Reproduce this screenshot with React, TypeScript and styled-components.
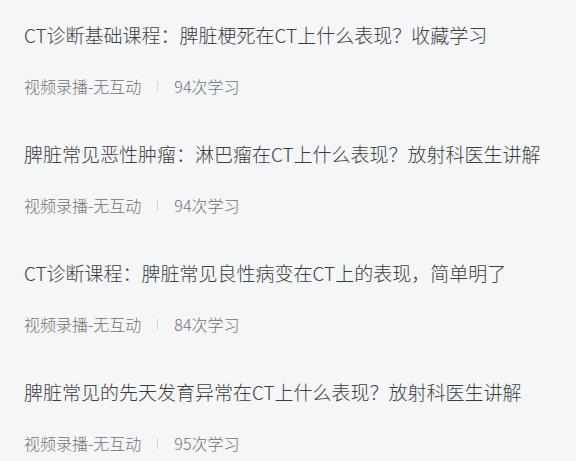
import styled, { createGlobalStyle } from 'styled-components';

const GlobalStyle = createGlobalStyle`
    html, body {
        margin: 0;
        padding: 0;
        background: #f5f6f8;
    }
    body {
        font-family: "Noto Sans CJK SC", "Noto Sans", sans-serif;
    }
`;

const List = styled.div`
    display: flex;
    flex-direction: column;
    padding: 0 24px;
`;

const Item = styled.div`
    display: flex;
    flex-direction: column;
    padding: 21px 0 22px;
`;

const Title = styled.div`
    font-size: 19px;
    font-weight: 300;
    line-height: 28px;
    color: #3d3d3d;
    white-space: nowrap;
    overflow: hidden;
`;

const Meta = styled.div`
    display: flex;
    align-items: center;
    margin-top: 26px;
    font-size: 16px;
    font-weight: 300;
    line-height: 22px;
    color: #707070;
`;

const Divider = styled.span`
    width: 1px;
    height: 11px;
    margin: 0 16px;
    background: #d4d5d8;
`;

const courses = [
    {title: 'CT诊断基础课程：脾脏梗死在CT上什么表现？收藏学习', count: 94},
    {title: '脾脏常见恶性肿瘤：淋巴瘤在CT上什么表现？放射科医生讲解', count: 94},
    {title: 'CT诊断课程：脾脏常见良性病变在CT上的表现，简单明了', count: 84},
    {title: '脾脏常见的先天发育异常在CT上什么表现？放射科医生讲解', count: 95},
];

export default function App() {
    return (
        <>
            <GlobalStyle/>
            <List>
                {courses.map((c, i) => (
                    <Item key={i}>
                        <Title>{c.title}</Title>
                        <Meta>
                            <span>视频录播-无互动</span>
                            <Divider/>
                            <span>{c.count}次学习</span>
                        </Meta>
                    </Item>
                ))}
            </List>
        </>
    );
}
